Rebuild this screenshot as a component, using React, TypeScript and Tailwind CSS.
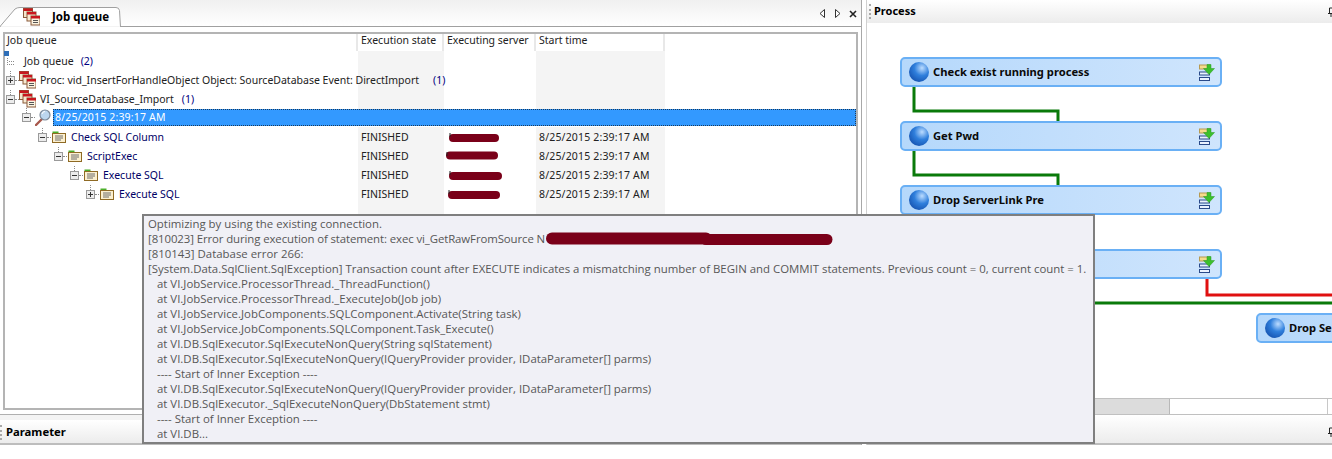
import type { ReactNode } from "react"

const TREE_FONT = "font-['Noto_Sans',sans-serif] text-[10.5px] leading-[19px]"

// expand / collapse box in front of a tree row, with its dotted stubs
function ToggleBox({ open }: { open: boolean }) {
  return (
    <span className="relative flex shrink-0">
      <span className="absolute bottom-full left-[4px] h-[5px] border-l border-dotted border-[#8a8a8a]" />
      <span className="absolute left-full top-[4px] w-[4px] border-t border-dotted border-[#8a8a8a]" />
      <svg width="9" height="9" viewBox="0 0 9 9">
        <rect x="0.5" y="0.5" width="8" height="8" fill="#ececec" stroke="#9a9a9a" />
        <path d="M2 4.5h5" stroke="#333" />
        {!open && <path d="M4.5 2v5" stroke="#333" />}
      </svg>
    </span>
  )
}

function ProcIcon() {
  return (
    <svg width="17" height="18" viewBox="0 0 17 18" className="shrink-0">
      <rect x="0.5" y="0.5" width="9" height="9" fill="#f4e6cc" stroke="#8a5a3a" />
      <rect x="0.5" y="0.5" width="9" height="2.5" fill="#c8161d" />
      <rect x="4" y="4" width="9" height="9" fill="#f6ead2" stroke="#8a5a3a" />
      <rect x="4" y="4" width="9" height="2.5" fill="#c8161d" />
      <rect x="8" y="8" width="9" height="9" fill="#fbf3e0" stroke="#8a5a3a" />
      <rect x="8" y="8" width="9" height="2.5" fill="#c8161d" />
      <path d="M10 12.5h5M10 14.5h5" stroke="#555" />
    </svg>
  )
}

function StepIcon() {
  return (
    <svg width="14" height="12" viewBox="0 0 14 12" className="shrink-0">
      <rect x="0.5" y="0.5" width="6" height="3" fill="#4caf2a" />
      <rect x="0.5" y="2.5" width="13" height="9" fill="#fbefcf" stroke="#8f6a24" />
      <path d="M3 5h8M3 7h8M3 9h6" stroke="#6f6f6f" />
    </svg>
  )
}

function LensIcon() {
  return (
    <svg width="16" height="17" viewBox="0 0 16 17" className="shrink-0">
      <path d="M7 10 1 16" stroke="#a8584c" strokeWidth="2.4" strokeLinecap="round" />
      <circle cx="10" cy="6" r="5" fill="#bcd6ee" stroke="#7d8a98" strokeWidth="1.2" />
      <path d="M7 5a3 3 0 0 1 3-2.5" stroke="#fff" fill="none" />
    </svg>
  )
}

function Scribble({ d, width }: { d: string; width: number }) {
  return (
    <svg width={width} height="11" viewBox={`0 0 ${width} 11`} className="block">
      <path d={d} stroke="#7a0019" strokeWidth="8" fill="none" strokeLinecap="round" />
      <path d="M1 1v4" stroke="#222" />
    </svg>
  )
}

type Row = {
  level: number
  toggle?: "open" | "closed"
  icon?: ReactNode
  label: string
  count?: string
  countGap?: string
  navy?: boolean
  state?: string
  server?: ReactNode
  start?: string
}

const STAMP = "8/25/2015 2:39:17 AM"

const rows: Row[] = [
  { level: 0, toggle: "closed", icon: <ProcIcon />, label: "Proc: vid_InsertForHandleObject Object: SourceDatabase Event: DirectImport", count: "(1)", countGap: "ml-[14px]" },
  { level: 0, toggle: "open", icon: <ProcIcon />, label: "VI_SourceDatabase_Import", count: "(1)", countGap: "ml-[8px]" },
]

const steps: Row[] = [
  { level: 2, toggle: "open", icon: <StepIcon />, label: "Check SQL Column", navy: true, state: "FINISHED", start: STAMP, server: <div className="pl-[5px]"><Scribble width={50} d="M4 6h42" /></div> },
  { level: 3, toggle: "open", icon: <StepIcon />, label: "ScriptExec", navy: true, state: "FINISHED", start: STAMP, server: <div className="pl-[2px]"><Scribble width={52} d="M4 4.5h44" /></div> },
  { level: 4, toggle: "open", icon: <StepIcon />, label: "Execute SQL", navy: true, state: "FINISHED", start: STAMP, server: <div className="pl-[5px]"><Scribble width={53} d="M4 6h45" /></div> },
  { level: 5, toggle: "closed", icon: <StepIcon />, label: "Execute SQL", navy: true, state: "FINISHED", start: STAMP, server: <div className="pl-[4px]"><Scribble width={52} d="M4 6h44" /></div> },
]

const columns = "grid grid-cols-[353px_86px_92px_129px_1fr]"

function TreeRow({ row }: { row: Row }) {
  const indent = [6, 22, 38, 54, 70, 86][row.level]
  return (
    <div className={`${columns} h-[19px] ${TREE_FONT}`}>
      <div
        className="relative z-10 flex items-center whitespace-nowrap text-[#222]"
        style={{ paddingLeft: indent - 5 }}
      >
        {row.toggle && <ToggleBox open={row.toggle === "open"} />}
        <span className={row.level === 0 ? "ml-[4px] flex" : "ml-[5px] flex"}>{row.icon}</span>
        <span className={`pt-[1px] ${row.level === 0 ? "ml-[4px]" : "ml-[5px]"} ${row.navy ? "text-[#000066]" : ""}`}>{row.label}</span>
        {row.count && <span className={`pt-[1px] ${row.countGap} text-[#000080]`}>{row.count}</span>}
      </div>
      <div className="bg-[#f4f4f4] pl-[3px] pt-[1px] text-[#222]">{row.state}</div>
      <div className="flex items-center">{row.server}</div>
      <div className="bg-[#f4f4f4] pl-[3px] pt-[1px] tracking-[0.17px] text-[#222]">{row.start}</div>
      <div />
    </div>
  )
}

function HeaderCell({ children, first }: { children?: ReactNode; first?: boolean }) {
  return (
    <div className={`border-r-2 border-[#e8e8e8] text-[#222] ${first ? "pl-[2px]" : "pl-[3px]"}`}>{children}</div>
  )
}

function Grip() {
  return <span className="h-[15px] w-[2px] shrink-0 border-l-2 border-dotted border-[#a8a8a8]" />
}

function Pin({ className }: { className: string }) {
  return (
    <svg width="8" height="10" viewBox="0 0 8 10" className={className}>
      <path d="M1 6.5h6M2.5 1h3v5.5h-3ZM4 6.5V10" fill="none" stroke="#222" />
    </svg>
  )
}

function JobQueuePanel() {
  return (
    <div className="flex min-h-0 w-[862px] flex-col border-r border-[#a8a8a8]">
      <div className="relative flex h-[27px] shrink-0 items-start border-b border-[#a0a0a0] bg-gradient-to-b from-[#f0f0f0] to-white">
        <svg width="122" height="20" viewBox="0 0 122 20" className="absolute left-0 top-[7px]">
          <path d="M0 19.5 15 2Q17 .5 20 .5H116q3 0 3.5 3L120.5 20H0Z" fill="#fff" stroke="#a0a0a0" />
          <path d="M1 20H120" stroke="#fff" strokeWidth="1.5" />
        </svg>
        <div className="relative ml-[23px] mt-[8px] flex items-center gap-[12px]">
          <ProcIcon />
          <span className="font-['Noto_Sans',sans-serif] text-[11.5px] font-bold leading-[18px] text-black">Job queue</span>
        </div>
        <div className="ml-auto mr-[4px] mt-[9px] flex items-center gap-[8px]">
          <svg width="7" height="9" viewBox="0 0 7 9"><path d="M5.5.5v8L1 4.5Z" fill="#fff" stroke="#333" /></svg>
          <svg width="7" height="9" viewBox="0 0 7 9"><path d="M1.5.5v8L6 4.5Z" fill="#fff" stroke="#333" /></svg>
          <svg width="8" height="8" viewBox="0 0 8 8"><path d="M1 1l6 6M7 1 1 7" stroke="#222" strokeWidth="1.6" /></svg>
        </div>
      </div>

      <div className="mx-[3px] mb-[4px] mt-[5px] flex min-h-0 flex-1 flex-col border-2 border-[#b4b4b4] bg-white">
        <div className={`${columns} h-[17px] shrink-0 ${TREE_FONT} !leading-[12px]`}>
          <HeaderCell first>Job queue</HeaderCell>
          <HeaderCell>Execution state</HeaderCell>
          <HeaderCell>Executing server</HeaderCell>
          <HeaderCell>Start time</HeaderCell>
          <div />
        </div>
        <div className={`${columns} relative h-[19px] shrink-0 ${TREE_FONT}`}>
          <div className="relative z-10 flex items-center whitespace-nowrap text-[#222]">
            <span className="absolute left-[-1px] top-[0px] h-[5px] w-[5px] bg-[#2f6fb8]" />
            <svg width="8" height="7" viewBox="0 0 8 7" className="ml-[1px] shrink-0">
              <path d="M1.5 0v7M3 3.5h5M3 6.5h5" stroke="#8a8a8a" strokeDasharray="1 1" fill="none" />
            </svg>
            <span className="ml-[10px] pt-[1px]">Job queue</span>
            <span className="ml-[7px] pt-[1px] text-[#000080]">(2)</span>
          </div>
          <div className="bg-[#f4f4f4]" />
          <div />
          <div className="bg-[#f4f4f4]" />
          <div />
        </div>
        {rows.map((r) => (
          <TreeRow key={r.label} row={r} />
        ))}
        <div className={`h-[19px] shrink-0 ${TREE_FONT}`}>
          <div className="flex h-full items-center pl-[17px]">
            <ToggleBox open />
            <span className="ml-[4px] flex"><LensIcon /></span>
            <div className="ml-[2px] flex h-[17px] flex-1 items-center border border-dotted border-[#1a3a5a] bg-[#3399ff] pl-[1px] tracking-[0.17px] text-white">
              {STAMP}
            </div>
          </div>
        </div>
        {steps.map((r, i) => (
          <TreeRow key={i} row={r} />
        ))}
        <div className={`${columns} min-h-0 flex-1`}>
          <div />
          <div className="bg-[#f4f4f4]" />
          <div />
          <div className="bg-[#f4f4f4]" />
          <div />
        </div>
      </div>

      <div className="h-[6px] shrink-0 border-t border-[#b0b0b0] bg-[#f4f4f4]" />
      <div className="flex h-[25px] shrink-0 items-center gap-[4px] border-b-2 border-[#bdbdbd] bg-gradient-to-b from-white to-[#ececec] pt-[2px] font-['Noto_Sans',sans-serif] text-[11.3px] font-bold text-black">
        <Grip />
        Parameter
      </div>
    </div>
  )
}

function NodeCard({ x, y, width, label }: { x: number; y: number; width: number; label: string }) {
  return (
    <div
      className="absolute flex h-[30px] items-center rounded-[5px] border-2 border-[#6ab0f5] bg-gradient-to-r from-[#b5d8fb] to-[#cfe5fd] pl-[7px] pr-[5px]"
      style={{ left: x, top: y, width }}
    >
      <span className="h-[20px] w-[20px] shrink-0 rounded-full bg-[radial-gradient(circle_at_65%_30%,#bcdcff_0%,#2f7fdc_40%,#0a3f9c_100%)]" />
      <span className="ml-[4px] whitespace-nowrap font-['Noto_Sans',sans-serif] text-[11.2px] font-bold text-[#0a0a0a]">{label}</span>
      <svg width="17" height="17" viewBox="0 0 17 17" className="ml-auto shrink-0">
        <rect x="1.5" y="1" width="10" height="4" fill="#f5dc8c" stroke="#b89a50" />
        <rect x="1.5" y="8" width="10" height="3" fill="#eaf2ff" stroke="#2a4a8a" />
        <rect x="1.5" y="13.5" width="10" height="3" fill="#eaf2ff" stroke="#2a4a8a" />
        <path d="M9 .5h4v4h3.5l-5.5 6-5.5-6H9Z" fill="#3cc02c" stroke="#2a9a20" strokeWidth="0.5" />
      </svg>
    </div>
  )
}

function ProcessPanel() {
  return (
    <div className="flex min-h-0 flex-1 flex-col border-l border-[#d0d0d0]">
      <div className="flex h-[23px] shrink-0 items-center gap-[3px] bg-gradient-to-b from-white to-[#ececec] pl-[2px] font-['Noto_Sans',sans-serif] text-[11px] font-bold text-black">
        <Grip />
        Process
        <Pin className="ml-auto mr-[-3px]" />
      </div>
      <div className="relative min-h-0 flex-1 overflow-hidden bg-white">
        {/* connector lines between the nodes, in canvas coordinates */}
        <svg className="absolute inset-0" width="466" height="375" viewBox="0 0 466 375">
          <path d="M47 64V88H191V98M47 128V152H191V162" fill="none" stroke="#0a7a0a" strokeWidth="3" />
          <path d="M47 192V216H191V226" fill="none" stroke="#0a7a0a" strokeWidth="3" />
          <path d="M47 256V280H466" fill="none" stroke="#0a7a0a" strokeWidth="3" />
          <path d="M340 256V272H466" fill="none" stroke="#e01010" strokeWidth="3" />
        </svg>
        <NodeCard x={33} y={34} width={322} label="Check exist running process" />
        <NodeCard x={33} y={98} width={322} label="Get Pwd" />
        <NodeCard x={33} y={162} width={322} label="Drop ServerLink Pre" />
        <NodeCard x={33} y={226} width={322} label="" />
        <NodeCard x={389} y={290} width={322} label="Drop ServerLink" />
      </div>
      <div className="flex h-[17px] shrink-0 border-y border-[#c0c0c0] bg-white">
        <div className="w-[303px] border-r border-[#b8b8b8] bg-[#dcdcdc]" />
        <div className="w-[158px] border-r border-[#c8c8c8]" />
      </div>
      <div className="flex h-[30px] shrink-0 items-center justify-end border-b-2 border-[#bdbdbd] bg-gradient-to-b from-white to-[#ececec]">
        <Pin className="mr-[-3px] mt-[6px]" />
      </div>
    </div>
  )
}

const tooltipLines: { text: string; indent?: boolean; scribble?: boolean }[] = [
  { text: "Optimizing by using the existing connection." },
  { text: "[810023] Error during execution of statement: exec vi_GetRawFromSource N", scribble: true },
  { text: "[810143] Database error 266:" },
  { text: "[System.Data.SqlClient.SqlException] Transaction count after EXECUTE indicates a mismatching number of BEGIN and COMMIT statements. Previous count = 0, current count = 1." },
  { text: "at VI.JobService.ProcessorThread._ThreadFunction()", indent: true },
  { text: "at VI.JobService.ProcessorThread._ExecuteJob(Job job)", indent: true },
  { text: "at VI.JobService.JobComponents.SQLComponent.Activate(String task)", indent: true },
  { text: "at VI.JobService.JobComponents.SQLComponent.Task_Execute()", indent: true },
  { text: "at VI.DB.SqlExecutor.SqlExecuteNonQuery(String sqlStatement)", indent: true },
  { text: "at VI.DB.SqlExecutor.SqlExecuteNonQuery(IQueryProvider provider, IDataParameter[] parms)", indent: true },
  { text: "---- Start of Inner Exception ----", indent: true },
  { text: "at VI.DB.SqlExecutor.SqlExecuteNonQuery(IQueryProvider provider, IDataParameter[] parms)", indent: true },
  { text: "at VI.DB.SqlExecutor._SqlExecuteNonQuery(DbStatement stmt)", indent: true },
  { text: "---- Start of Inner Exception ----", indent: true },
  { text: "at VI.DB...", indent: true },
]

function ErrorTooltip() {
  return (
    <div className="absolute left-[142px] top-[214px] h-[230px] w-[953px] border-2 border-[#7f7f7f] bg-[#f0f0f6] pl-[4px] font-['Open_Sans',sans-serif] text-[11.42px] leading-[15px] text-[#575757]">
      {tooltipLines.map((l, i) => (
        <div key={i} className={`relative flex h-[15px] items-center whitespace-nowrap ${l.indent ? "pl-[9px]" : ""} ${l.scribble ? "tracking-[-0.1px]" : ""}`}>
          {l.text}
          {l.scribble && (
            <svg width="287" height="14" viewBox="0 0 287 14" className="ml-[1px] shrink-0">
              <path d="M6 6.5H160" stroke="#7a0019" strokeWidth="12" fill="none" strokeLinecap="round" />
              <path d="M160 7.5H281" stroke="#7a0019" strokeWidth="11" fill="none" strokeLinecap="round" />
            </svg>
          )}
        </div>
      ))}
    </div>
  )
}

export default function App() {
  return (
    <div className="relative h-[459px] w-[1332px] overflow-hidden bg-white">
      <div className="flex h-[445px] gap-[4px]">
        <JobQueuePanel />
        <ProcessPanel />
      </div>
      <ErrorTooltip />
    </div>
  )
}
